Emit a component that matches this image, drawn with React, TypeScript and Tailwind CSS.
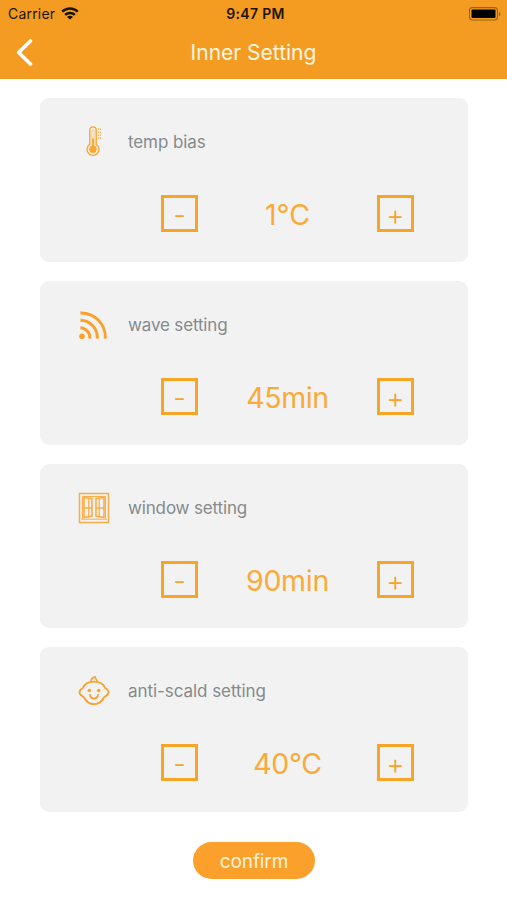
import React from "react";

function Thermometer() {
  return (
    <svg width="32" height="32" viewBox="0 0 32 32" fill="none" stroke="#f9a633">
      <path d="M11.800 18.300V4.100a3.200 3.200 0 0 1 6.400 0v14.200a6 6 0 1 1-6.400 0z" strokeWidth="1.400" />
      <path d="M13.900 19V5a1.100 1.100 0 0 1 2.200 0v14" strokeWidth=".5" />
      <circle cx="15" cy="23.200" r="3.700" fill="#f9a633" stroke="none" />
      <path d="M15 12.500v8" strokeWidth="1.900" />
      <path d="M20 3.100h3.300M20 6.100h3.300M20 9.100h3.300M20 12.100h3.300" strokeWidth="1.300" strokeDasharray="1.200 .6" />
    </svg>
  );
}

function Waves() {
  return (
    <svg width="32" height="32" viewBox="0 0 32 32" fill="none" stroke="#f9a12b" strokeWidth="2.900">
      <circle cx="4" cy="27.200" r="2.800" fill="#f9a12b" stroke="none" />
      <path d="M2.400 18.800A10.300 10.300 0 0 1 12 29.600" />
      <path d="M2.400 11.200A17.200 17.200 0 0 1 19.300 29.600" />
      <path d="M2.400 4A24.200 24.200 0 0 1 27.300 29.600" />
    </svg>
  );
}

function WindowIcon() {
  return (
    <svg width="32" height="32" viewBox="0 0 32 32" fill="none" stroke="#f9ad49">
      <rect x="1.500" y="1.500" width="29" height="29" strokeWidth="1.500" />
      <path d="M4.500 26.500V4.500h23v22M3 27.200h26" strokeWidth="1" />
      <path d="M6 5.500l8 1v17.500l-8 1.500zM26 5.500l-8 1v17.500l8 1.500z" strokeWidth="1.600" />
      <path d="M10.800 7v17.500M21.200 7v17.500M6 16h8M18 16h8" strokeWidth="1.300" />
    </svg>
  );
}

function Baby() {
  return (
    <svg width="32" height="32" viewBox="0 0 32 32" fill="none" stroke="#f9a12b" strokeWidth="1.800" strokeLinecap="round" strokeLinejoin="round">
      <path d="M16 6.700c5.800 0 9.600 2.600 11 6.300 1.700.8 3.300 2.500 3.600 4.400-.4 2.200-2.200 3.700-4.300 4.600C24 26.500 20.700 29.200 16 29.200S8 26.500 5.700 22c-2.100-.9-3.900-2.400-4.300-4.600.3-1.900 1.900-3.600 3.600-4.400C6.400 9.300 10.200 6.700 16 6.700z" />
      <path d="M12.800 6.700c.2-2 1.700-4.200 4.400-4.800-.3 1.800 1.900 2.300 1.900 4.800" strokeWidth="1.600" />
      <path d="M12 20c.8 4.700 7.200 4.700 8 0" />
      <circle cx="11.300" cy="15.500" r="1.800" fill="#f9a12b" stroke="none" />
      <circle cx="20.700" cy="15.500" r="1.800" fill="#f9a12b" stroke="none" />
    </svg>
  );
}

function StepButton({ sign }: { sign: string }) {
  return (
    <button className="flex h-[37px] w-[37px] items-center justify-center border-3 border-[#f7a526] pt-[3px] text-[28px] leading-none font-light text-[#f9a12b]">
      {sign}
    </button>
  );
}

interface SettingProps {
  icon: React.ReactNode;
  label: string;
  labelClass: string;
  value: string;
  valueClass: string;
}

function SettingCard({ icon, label, labelClass, value, valueClass }: SettingProps) {
  return (
    <section className="h-[164.500px] w-[428px] rounded-[9px] bg-[#f2f2f2] pt-7">
      <div className="flex h-8 items-center gap-[18px] pl-[38px]">
        {icon}
        <h2 className={`text-[17px] leading-6 whitespace-nowrap text-[#858a8d] ${labelClass}`}>{label}</h2>
      </div>
      <div className="mt-[37px] flex h-[37px] items-center justify-between pr-[54px] pl-[121px]">
        <StepButton sign="-" />
        <span className={`pt-[3px] text-[28.500px] leading-[34px] font-[370] whitespace-nowrap text-[#f9aa38] ${valueClass}`}>{value}</span>
        <StepButton sign="+" />
      </div>
    </section>
  );
}

export default function App() {
  return (
    <div className="h-[900px] w-[507px] overflow-hidden bg-white font-['Inter','Liberation_Sans',sans-serif]">
      <header className="h-[79px] bg-[#f39c21]">
        <div className="grid h-[27px] grid-cols-3 items-center pr-1.5 pl-2 text-[14px] text-[#1d1305]">
          <div className="flex items-center gap-1.5">
            <span className="tracking-[0.2px]">Carrier</span>
            <svg width="18" height="13" viewBox="0 0 18 13" fill="none" stroke="#1d1305" strokeWidth="2.500">
              <path d="M1.200 4.700a11.200 11.200 0 0 1 15.600 0M4.100 7.900a7 7 0 0 1 9.800 0" />
              <path d="M9 12.600 6 9.900a4.200 4.200 0 0 1 6 0z" fill="#1d1305" stroke="none" />
            </svg>
          </div>
          <span className="pl-0.5 text-center font-semibold tracking-[0.300px] whitespace-nowrap">9:47 PM</span>
          <svg className="justify-self-end" width="33" height="14" viewBox="0 0 33 14">
            <rect x="1.500" y=".6" width="28" height="12.400" rx="3" fill="none" stroke="#986515" strokeWidth="1.100" />
            <rect x="3.500" y="2.500" width="24" height="8.600" rx="1" fill="#000" />
            <path d="M31 4.800c2 .8 2 3.600 0 4.400z" fill="#986515" />
          </svg>
        </div>
        <div className="grid h-[50px] grid-cols-[60px_1fr_60px] items-center">
          <button aria-label="Back" className="pl-4">
            <svg width="17" height="27" viewBox="0 0 17 27" fill="none" stroke="#fff" strokeWidth="3.600" strokeLinecap="round" strokeLinejoin="round">
              <path d="M14.500 2 2.700 13.500l11.800 11.500" />
            </svg>
          </button>
          <h1 className="pt-0.5 text-center text-[21px] leading-7 font-normal text-[#fff6e2]">Inner Setting</h1>
        </div>
      </header>
      <main className="flex flex-col items-center gap-[18.700px] pt-[18.500px] pl-px">
        <SettingCard icon={<Thermometer />} label="temp bias" labelClass="tracking-[-0.1px]" value="1°C" valueClass="tracking-[-0.1px]" />
        <SettingCard icon={<Waves />} label="wave setting" labelClass="tracking-[-0.15px]" value="45min" valueClass="tracking-[-0.4px]" />
        <SettingCard icon={<WindowIcon />} label="window setting" labelClass="tracking-[-0.15px]" value="90min" valueClass="tracking-[-0.3px]" />
        <SettingCard icon={<Baby />} label="anti-scald setting" labelClass="tracking-[-0.06px]" value="40°C" valueClass="tracking-[-0.3px]" />
        <button className="mt-3 h-[37px] w-[122px] rounded-full bg-[#faa02b] pt-0.5 text-[19px] tracking-[-0.1px] text-[#fff4dd]">confirm</button>
      </main>
    </div>
  );
}
